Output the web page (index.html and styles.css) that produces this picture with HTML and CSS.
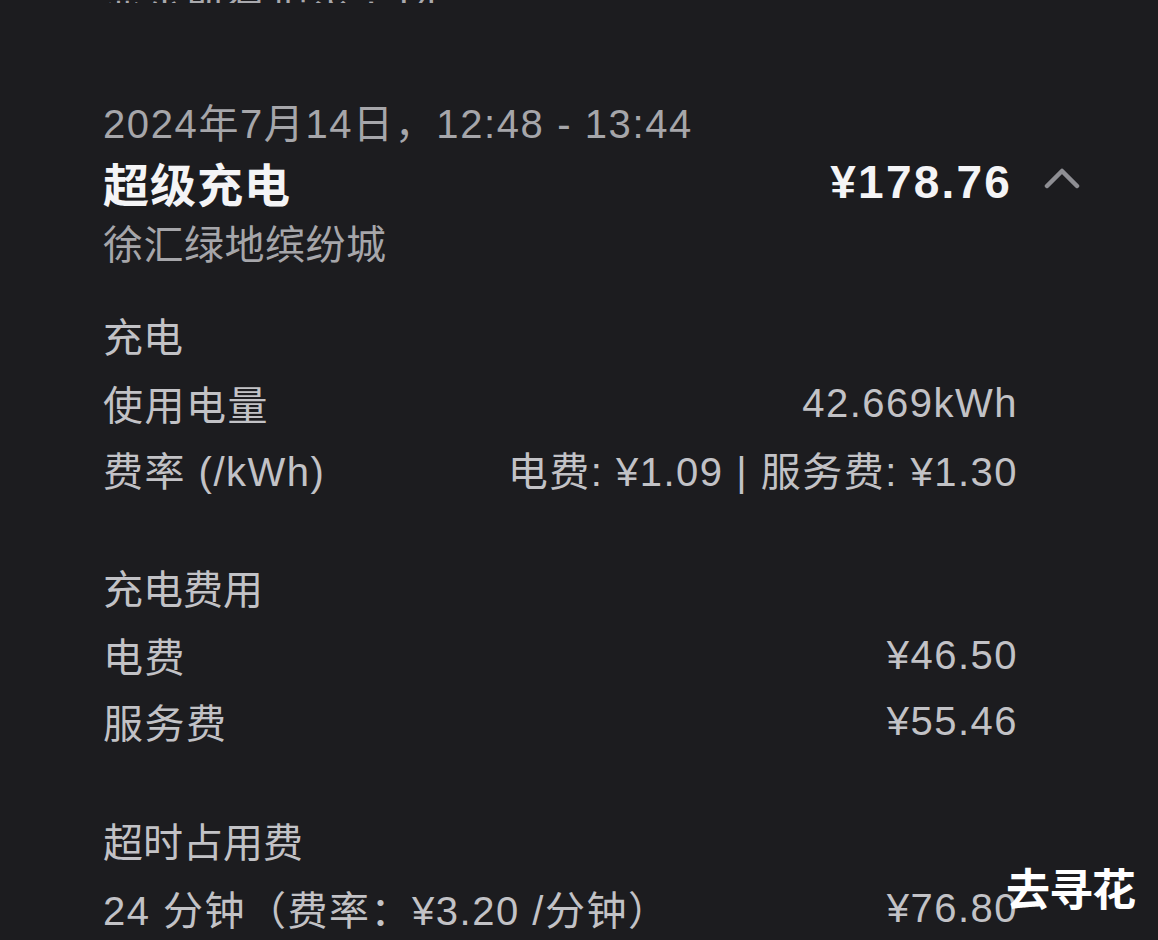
FILE: index.html
```html
<!DOCTYPE html>
<html lang="zh-CN">
<head>
<meta charset="utf-8">
<link rel="stylesheet" href="styles.css">
</head>
<body>
<div class="page">
  <div class="cut">显示所有记录 · 14</div>
  <div class="head">
    <div class="date">2024年7月14日，12:48 - 13:44</div>
    <div class="title-row">
      <div class="title">超级充电</div>
      <div class="price-wrap">
        <span class="price">¥178.76</span>
        <svg class="chev" width="36" height="22" viewBox="0 0 36 22"><path d="M3 19 L18 4 L33 19" fill="none" stroke="#8e8e93" stroke-width="4.5" stroke-linecap="round" stroke-linejoin="round"/></svg>
      </div>
    </div>
    <div class="loc">徐汇绿地缤纷城</div>
  </div>

  <div class="section s1">
    <div class="label">充电</div>
    <div class="row"><span>使用电量</span><span>42.669kWh</span></div>
    <div class="row"><span>费率 (/kWh)</span><span>电费: ¥1.09 | 服务费: ¥1.30</span></div>
  </div>

  <div class="section s2">
    <div class="label">充电费用</div>
    <div class="row"><span>电费</span><span>¥46.50</span></div>
    <div class="row"><span>服务费</span><span>¥55.46</span></div>
  </div>

  <div class="section s3">
    <div class="label">超时占用费</div>
    <div class="row"><span>24 分钟（费率：¥3.20 /分钟）</span><span>¥76.80</span></div>
  </div>
</div>
<div class="mark">去寻花</div>
</body>
</html>
```

FILE: styles.css
```css
html, body {
  margin: 0;
  padding: 0;
  background: #1c1c1f;
  height: 940px;
  overflow: hidden;
}
body {
  font-family: "Liberation Sans", "Noto Sans CJK SC", sans-serif;
  color: #c9c9cc;
  position: relative;
}
.page {
  padding: 0 140px 0 103px;
}
.cut {
  height: 22px;
  margin-top: -19px;
  line-height: 40px;
  font-size: 40px;
  color: #a9a9ad;
  letter-spacing: 1.5px;
  overflow: hidden;
}
.head {
  margin-top: 88px;
}
.date {
  height: 62px;
  line-height: 66px;
  font-size: 40px;
  color: #a6a6aa;
  letter-spacing: 1.6px;
}
.title-row {
  height: 58px;
  display: flex;
  align-items: center;
  justify-content: space-between;
  margin-right: -62px;
}
.title {
  font-size: 46px;
  font-weight: 700;
  color: #f4f4f6;
  letter-spacing: 1px;
}
.price-wrap {
  display: flex;
  align-items: center;
  gap: 32px;
}
.price {
  font-size: 46px;
  font-weight: 700;
  color: #f4f4f6;
  letter-spacing: 2.2px;
}
.chev {
  margin-top: -8px;
}
.loc {
  height: 62px;
  line-height: 68px;
  font-size: 40px;
  color: #a6a6aa;
  letter-spacing: 0.5px;
}
.label {
  height: 64px;
  line-height: 64px;
  font-size: 40px;
  color: #c2c2c6;
}
.s1 {
  margin-top: 33px;
}
.s2 {
  margin-top: 56px;
}
.s3 {
  margin-top: 57px;
}
.row {
  height: 66px;
  display: flex;
  align-items: center;
  justify-content: space-between;
  font-size: 40px;
  color: #c2c2c6;
  letter-spacing: 1.5px;
}
.mark {
  position: absolute;
  left: 1006px;
  top: 855px;
  font-size: 44px;
  font-weight: 700;
  color: #ffffff;
  font-family: "Noto Sans CJK SC", sans-serif;
  letter-spacing: -1px;
}
```
